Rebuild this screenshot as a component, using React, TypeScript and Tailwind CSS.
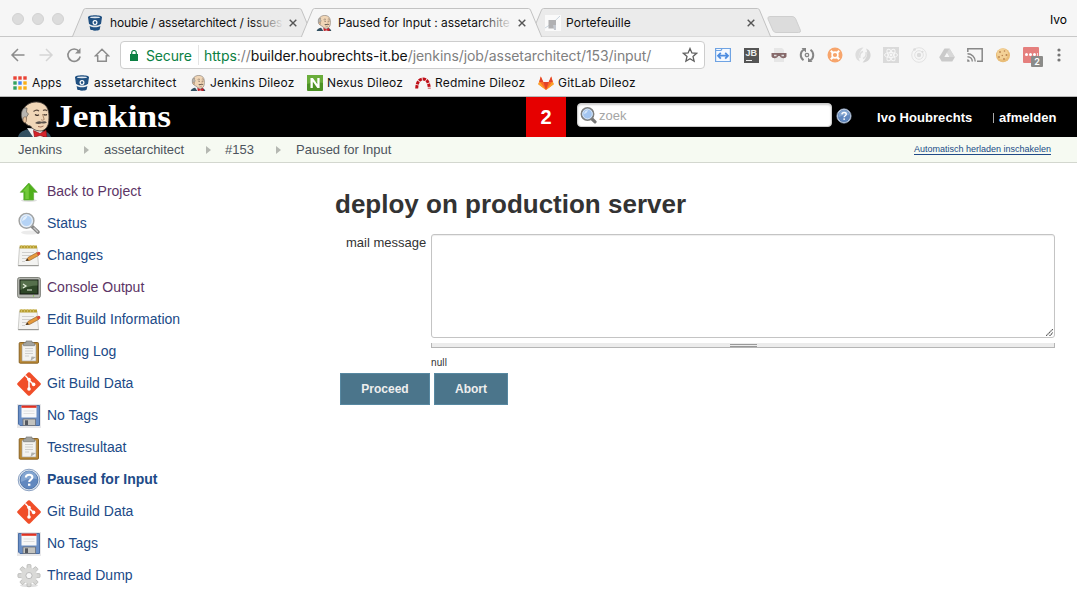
import type { ReactNode } from 'react';

const Mac = "font-['Inter','Liberation_Sans',sans-serif]";

function Svg({ s = 16, box = '0 0 16 16', children, className = '' }: { s?: number; box?: string; children: ReactNode; className?: string }) {
  return (
    <svg width={s} height={s} viewBox={box} fill="none" className={`block shrink-0 ${className}`}>
      {children}
    </svg>
  );
}

const Bitbucket = () => (
  <Svg>
    <path d="M1 2.2C1 .9 4.2.2 8 .2s7 .7 7 2l-.9 6c-.4 1.6-3.2 2.300-6.100 2.300s-5.700-.7-6.100-2.300Z" fill="#205081" />
    <ellipse cx="8" cy="2.300" rx="5" ry=".9" fill="#dfe7ef" />
    <path d="M2.600 11c3 1.700 7.800 1.700 10.800 0l-.7 3.500c-1 1.600-8.400 1.600-9.400 0Z" fill="#205081" />
    <circle cx="8" cy="7.600" r="1.900" stroke="#fff" strokeWidth="1.200" />
  </Svg>
);

const Butler = ({ w = 16, h = 16 }: { w?: number; h?: number }) => (
  <svg width={w} height={h} viewBox="0 0 33 36" fill="none" className="block shrink-0">
    <path d="M0 36c1-4.500 4-6 9-7.500l15 1c5 1 8 3 9 6.500Z" fill="#335061" />
    <path d="M9 27l6 9h10l-1-8Z" fill="#f2f2f2" />
    <path d="M7 21C4 17 3 8 9 4 14 0 23-.5 28 5c3 4 3.500 10 2.500 17-.7 4-3.500 7.500-7.500 8-4 0-8-1-10.500-5C9 24.500 8 23 7 21Z" fill="#f0d6b7" stroke="#4a423c" strokeWidth=".9" />
    <path d="M6 7C3 10 2.500 15 5 20l2.500 1 1-5 2-3-2-2 .5-4Z" fill="#b8b5b0" stroke="#615b55" strokeWidth=".7" />
    <path d="M5.500 16.500q3-2 3 1.500t-1.500 4q-3-1-1.500-5.500Z" fill="#e8c49e" stroke="#755d48" strokeWidth=".6" />
    <path d="M15.500 10.500q3-2.500 5.500-.5M25 9.500q2.500-1.500 4 .5" stroke="#5c4a3d" strokeWidth="1.100" />
    <path d="M17 13.500q2 1.700 4 .3M25.500 13.500q2 1 3.500 0" stroke="#33261f" strokeWidth="1.100" />
    <path d="M24.500 13l1.700 5.500q-1.500 1.300-3.200.2" stroke="#a37e62" strokeWidth=".9" />
    <path d="M17 22q3-2.500 6.500-1.200 3.500-1.300 5.500.7-2.500 1.800-5.200.7Q20 23.700 17 22Z" fill="#5b524c" />
    <path d="M20 25.500q3 1.300 5.500-.5" stroke="#925f49" strokeWidth=".9" />
    <path d="M15.500 29.500l6.500 3 6-3.200.8 6.700H27l-5-1.500-5.500 1.500Z" fill="#d8222a" stroke="#8e141a" strokeWidth=".7" />
  </svg>
);

const Close = () => (
  <Svg s={8} box="0 0 8 8"><path d="M.7.7l6.600 6.600M7.300.7.7 7.300" stroke="#555" strokeWidth="1.400" /></Svg>
);

function Tab({ icon, title, active, fade, text }: { icon: ReactNode; title: string; active?: boolean; fade?: boolean; text: string }) {
  return (
    <div className={`relative -ml-3 h-[29px] w-[241px] shrink-0 ${active ? 'z-10' : ''}`}>
      <svg width="241" height="29" viewBox="0 0 241 29" className="absolute inset-0">
        <path d="M0 28.500h.5L11.500 2Q12.200.5 13.500 .5h214q1.300 0 2 1.500L240.500 28.500h.5" fill={active ? '#f6f6f6' : '#ebebeb'} stroke="#c2c2c2" />
        {active && <path d="M1.500 28.500h238" stroke="#f6f6f6" strokeWidth="1.400" />}
      </svg>
      <div className="relative flex h-full items-center pl-[15px]">
        {icon}
        <div className="relative ml-[6px] w-[175px]">
          <span className={`block whitespace-nowrap text-[12px] leading-[18px] text-[#111] ${text}`}>{title}</span>
          {fade && <span className={`absolute right-0 top-0 h-full w-8 bg-gradient-to-r from-transparent ${active ? 'to-[#f6f6f6]' : 'to-[#ebebeb]'}`} />}
        </div>
        <span className="ml-[5px]"><Close /></span>
      </div>
    </div>
  );
}

const Photo = () => (
  <Svg>
    <rect width="16" height="16" fill="#fafafa" />
    <path d="M0 13Q8 9 15 1" stroke="#c9d5df" />
    <rect x="3.500" y="5" width="7.500" height="8.500" fill="#b0b0b2" />
    <path d="M8 10h3v5H9Z" fill="#c3c7ce" />
  </Svg>
);

const AppsIcon = () => (
  <Svg s={14} box="0 0 14 14">
    {['#ea4335', '#ea4335', '#ea4335', '#34a260', '#4285f4', '#fbaf16', '#34a260', '#fbaf16', '#fbaf16'].map((c, i) => (
      <rect key={i} x={(i % 3) * 5 + 0.3} y={Math.floor(i / 3) * 5 + 0.3} width="3.400" height="3.400" fill={c} />
    ))}
  </Svg>
);

const Nexus = () => (
  <Svg>
    <rect width="16" height="16" rx="1" fill="#4d9225" />
    <path d="M0 0h16v8Q8 6 0 9Z" fill="#6aad3b" />
    <path d="M3.500 13V3h2.400l4.400 6.300V3h2.300v10h-2.300L5.800 6.600V13Z" fill="#fff" />
  </Svg>
);

const Redmine = () => (
  <Svg>
    <path d="M1.700 13.500C2 7.500 4 4 8 4s6 3.500 6.300 9.500" stroke="#c01019" strokeWidth="3" strokeDasharray="3.300 .8" />
  </Svg>
);

const Gitlab = () => (
  <Svg>
    <path d="M8 15 .3 9.300 2.800 1.500 5.300 7h5.400l2.500-5.500 2.500 7.800Z" fill="#fc6d26" />
    <path d="M8 15 5.300 7h5.400Z" fill="#e24329" />
    <path d="M.3 9.300 1.400 6.500 8 15ZM15.700 9.300l-1.100-2.800L8 15Z" fill="#fca326" />
    <path d="M2.800 1.500 1.300 7h4ZM13.200 1.500 14.700 7h-4Z" fill="#e24329" />
  </Svg>
);

const extensions: ReactNode[] = [
  <Svg><path d="M.6 14.500V1.500h14.800v13ZM1 3.500h5l1-1.700" fill="#f4f9ff" stroke="#6fa3e3" strokeWidth="1.200" /><path d="M3.500 8.700h9M5.800 5.800 3 8.700l2.800 2.900M10.200 5.800 13 8.700l-2.800 2.900" stroke="#4e8de0" strokeWidth="1.800" /></Svg>,
  <div className="relative h-[15px] w-[15px] bg-[#555] pl-[2px] font-['Liberation_Sans',sans-serif] text-[9px] font-bold leading-[11px] text-[#eee]">JB<span className="absolute bottom-[2px] left-[2px] h-px w-[6px] bg-[#eee]" /></div>,
  <Svg><path d="M3 1h8l2 2v12H3Z" fill="#e6e6e6" /><path d="M.5 6h15v3.500q-.5 2-3.500 1.800Q9.500 11 8.700 9H7.300Q6.500 11 4 11.300 1 11.500.5 9.500Z" fill="#86696a" /><path d="M3 8.500h2.500M10.500 8.500H13" stroke="#ddd" strokeWidth="1.300" /></Svg>,
  <Svg><path d="M4.500 13.200A6.400 6.400 0 0 1 4.800 2.500M11.500 2.800A6.400 6.400 0 0 1 11.200 13.500" stroke="#858585" strokeWidth="2" /><path d="M2.500 1H7v4.500ZM13.500 15H9v-4.500Z" fill="#858585" /><circle cx="8" cy="8" r="1.700" stroke="#858585" strokeWidth="1.300" /></Svg>,
  <Svg><circle cx="8" cy="8" r="7.500" fill="#f7a56c" /><circle cx="8" cy="8" r="2.900" stroke="#fff" strokeWidth="1.600" /><path d="m3.800 3.800 2 2m4.400 4.400 2 2m0-8.400-2 2m-4.400 4.400-2 2" stroke="#fff" strokeWidth="2.200" /></Svg>,
  <Svg><path d="M8.500.5C2 1 0 5 .5 9c.3 3 2.500 5 4.500 5.500C2.500 10 4 5 8.500.5Z" fill="#ddd" /><path d="M7.500 15.500C14 15 16 11 15.500 7c-.3-3-2.500-5-4.500-5.500C13.500 6 12 11 7.500 15.500Z" fill="#d5d5d5" /><path d="M5 11q-1-5 3-6.500M11 5q1 5-3 6.500" stroke="#ddd" strokeWidth="1.500" /></Svg>,
  <Svg><rect width="16" height="16" fill="#dadada" /><g stroke="#f7f7f7"><ellipse cx="8" cy="8" rx="6.500" ry="2.500" /><ellipse cx="8" cy="8" rx="6.500" ry="2.500" transform="rotate(60 8 8)" /><ellipse cx="8" cy="8" rx="6.500" ry="2.500" transform="rotate(120 8 8)" /></g><circle cx="8" cy="8" r="1.400" fill="#f7f7f7" /></Svg>,
  <Svg><circle cx="8" cy="8" r="7.300" stroke="#e2e2e2" strokeWidth="1" /><circle cx="8" cy="8" r="4.300" stroke="#e2e2e2" strokeWidth="1" /><circle cx="8" cy="8" r="2.200" fill="#dcdcdc" /><circle cx="3.500" cy="2.500" r="1.300" fill="#dcdcdc" /><circle cx="11.500" cy="4.800" r="1.100" fill="#dcdcdc" /></Svg>,
  <Svg><path d="M5.500 1.500h5l5.300 8.800-2.500 4.200H2.700L.2 10.300Z" fill="#cacaca" /><path d="M8 5.500 5.300 10h5.400Z" fill="#f6f6f6" /><path d="M10.500 1.500 8 5.500l2.700 4.500h5Z" fill="#d8d8d8" /></Svg>,
  <Svg><path d="M.8 5V1.700h14.400v12.600H10" stroke="#888" strokeWidth="1.500" /><path d="M.5 6.800a7.700 7.700 0 0 1 7.700 7.700M.5 9.700a4.800 4.800 0 0 1 4.800 4.800" stroke="#888" strokeWidth="1.400" /><path d="M.2 12.200a2.500 2.500 0 0 1 2.500 2.500H.2Z" fill="#888" /></Svg>,
  <Svg><circle cx="8" cy="8.200" r="7" fill="#e9bd78" /><circle cx="7.500" cy="7" r="5.500" fill="#f3d196" /><g fill="#b98350"><circle cx="5" cy="5" r=".9" /><circle cx="9.500" cy="4" r=".8" /><circle cx="11.500" cy="8" r="1" /><circle cx="7.300" cy="8.500" r=".8" /><circle cx="4" cy="10" r=".9" /><circle cx="9" cy="12" r=".9" /></g></Svg>,
  <div className="relative h-4 w-4 rounded-[1px] bg-[#e57f7d]">
    <div className="flex gap-[1px] pl-[2px] pt-[6px]"><i className="h-[3px] w-[3px] rounded-full bg-white" /><i className="h-[3px] w-[3px] rounded-full bg-white" /><i className="h-[3px] w-[3px] rounded-full bg-white" /><i className="h-[3px] w-px bg-white/70" /></div>
    <span className="absolute left-2 top-[9px] h-[11px] w-3 rounded-[1px] bg-[#8b8b89] text-center font-['Inter',sans-serif] text-[9px] font-semibold leading-[11px] text-white">2</span>
  </div>,
  <Svg><g fill="#757575"><circle cx="8" cy="3" r="1.600" /><circle cx="8" cy="8" r="1.600" /><circle cx="8" cy="13" r="1.600" /></g></Svg>,
];

const Magnifier = ({ s = 24 }: { s?: number }) => (
  <Svg s={s} box="0 0 24 24">
    <ellipse cx="13" cy="20.500" rx="9" ry="2" fill="#000" opacity=".08" />
    <path d="m14.500 14 6.500 6" stroke="#858585" strokeWidth="3.600" strokeLinecap="round" />
    <path d="m17 16 3.500 3.500" stroke="#c9c9c9" strokeWidth="1.300" strokeLinecap="round" />
    <circle cx="9.500" cy="8.800" r="7.400" fill="#a9cbf0" stroke="#a2a2a0" strokeWidth="1.400" />
    <circle cx="9.500" cy="8.800" r="5.900" fill="#b5d3f5" stroke="#e9eff6" strokeWidth="1.200" />
    <path d="M5 9q1-5 5.500-5.200Q9 8 5 9Z" fill="#e4f0fc" />
  </Svg>
);

const SearchIcon = () => (
  <Svg s={17} box="0 0 17 17">
    <path d="m11 11 4 3.800" stroke="#777" strokeWidth="3.200" strokeLinecap="round" />
    <circle cx="7.500" cy="7" r="6.200" fill="#8fb8ea" stroke="#7f7f7c" strokeWidth="1.500" />
    <circle cx="7.500" cy="7" r="4.800" fill="#a3c5f0" stroke="#dfe7ef" strokeWidth=".9" />
    <path d="M4 7q.5-3.500 4-4Q7 6.500 4 7Z" fill="#d5e6fa" />
  </Svg>
);

const Notepad = () => (
  <Svg s={24} box="0 0 24 24">
    <path d="M2.500 3h17.500l1.500 18.500H1.200Z" fill="#f3f3f1" stroke="#c2c2be" strokeWidth=".8" />
    <path d="M1.200 21.700h20.500" stroke="#8e8e8b" strokeWidth="1" />
    <path d="M2.700 1.500h17.300v3H2.700Z" fill="#b9a032" />
    <path d="M4.500 1v3M7.500 1v3M10.500 1v3M13.500 1v3M16.500 1v3" stroke="#d3c068" strokeWidth=".9" />
    <path d="M5 8.500h12M5 11.500h9M5 14.500h5M5 17.500h3" stroke="#cfcfcd" strokeWidth="1" />
    <path d="m9 16.500 2-3 9-5 1.500 3-9 5Z" fill="#e69a3c" stroke="#96642b" strokeWidth=".7" />
    <path d="m19.500 9 2-1.200q2 0 1.900 2.400l-2 1.600Z" fill="#d64a3a" />
    <path d="m8.500 17 2.200-2.400 1 1.800Z" fill="#3d3429" />
  </Svg>
);

const Terminal = () => (
  <Svg s={24} box="0 0 24 24">
    <rect x=".6" y="1.500" width="22.800" height="20.300" rx="2" fill="#b5b7b1" stroke="#777972" strokeWidth=".9" />
    <rect x="3" y="4" width="18" height="14" fill="#2e4727" stroke="#11170f" />
    <path d="M3.500 4.500h17v5Q11 9.500 3.500 14Z" fill="#56704c" />
    <path d="m6 8 3 2-3 2M10 14h5" stroke="#e6f0dd" strokeWidth="1.200" />
    <circle cx="16.500" cy="19.900" r=".7" fill="#7dc52f" />
  </Svg>
);

const Clipboard = () => (
  <Svg s={24} box="0 0 24 24">
    <rect x="2.200" y="2.500" width="19.300" height="20.700" rx="1" fill="#bd8a35" stroke="#80591b" strokeWidth=".9" />
    <path d="M5 4.500h14v16.500h-14Z" fill="#f3f3f1" stroke="#a3a09a" strokeWidth=".6" />
    <path d="M8 8.500h8M8 11h8M8 13.500h8M8 16h4" stroke="#cfcfcd" />
    <path d="m13.500 21 1-4.500 4.500.5Z" fill="#b0b0ac" />
    <path d="M6.500 5.700V3.500Q7 2.500 9 2.500V1h6v1.500q2 0 2.500 1v2.200Z" fill="#a2a39f" stroke="#7b7c78" strokeWidth=".7" />
  </Svg>
);

const Git = () => (
  <Svg s={24} box="0 0 24 24">
    <path d="M11 .6q1-.9 2 0l10.400 10.400q.9 1 0 2L13 23.400q-1 .9-2 0L.6 13q-.9-1 0-2Z" fill="#f04e29" />
    <path d="M8.300 3.500 12 7.500V17M12 8l4.500 4.500" stroke="#fff" strokeWidth="1.500" />
    <g fill="#fff"><circle cx="12" cy="7.600" r="1.800" /><circle cx="12" cy="17" r="1.800" /><circle cx="16.600" cy="12.400" r="1.800" /></g>
  </Svg>
);

const Floppy = () => (
  <Svg s={24} box="0 0 24 24">
    <rect width="24" height="24" fill="#e8e8ea" />
    <path d="M1.500 1.500h21v20H3l-1.500-1.500Z" fill="#6a8fc6" stroke="#4b6fa5" />
    <path d="M4.500 1.500h15v12h-15Z" fill="#f8f8f8" />
    <path d="M4.500 1.500h15v2.300h-15Z" fill="#e2301f" />
    <path d="M6.500 7h11M6.500 9.500h11" stroke="#e0e0e0" />
    <path d="M6 15h12.500v6.500H6Z" fill="#c3c3bf" stroke="#6b7079" strokeWidth=".8" />
    <path d="M8 16.300h3v4.700H8Z" fill="#54585f" />
  </Svg>
);

const HelpIcon = ({ s = 24 }: { s?: number }) => (
  <Svg s={s} box="0 0 24 24">
    <circle cx="12" cy="12" r="10.800" fill="#dde5ef" stroke="#8da3c3" strokeWidth="1" />
    <circle cx="12" cy="12" r="8.900" fill="#6188bf" stroke="#4a70a7" strokeWidth=".9" />
    <path d="M4 11a8 8 0 0 1 16 0Q12 9 4 14Z" fill="#83a5d1" />
    <path d="M8.800 9.500Q9 6.700 12.200 6.700t3.200 2.600c0 2.200-3.200 2.300-3.200 4.700" stroke="#fff" strokeWidth="2.100" />
    <rect x="11" y="15.600" width="2.400" height="2.200" fill="#fff" />
  </Svg>
);

const Gear = () => (
  <Svg s={24} box="0 0 24 24">
    <ellipse cx="12" cy="21.500" rx="9" ry="1.600" fill="#000" opacity=".12" />
    {[0, 45, 90, 135].map((a) => (
      <rect key={a} x="10" y=".5" width="4" height="22.200" rx="1" fill="#d6d6d4" stroke="#b2b2b0" strokeWidth=".7" transform={`rotate(${a} 12 11.600)`} />
    ))}
    <circle cx="12" cy="11.600" r="8" fill="#dadad8" />
    <circle cx="12" cy="11.600" r="3.100" fill="#f8f8f8" stroke="#b5b5b5" strokeWidth=".9" />
  </Svg>
);

const UpArrow = () => (
  <Svg s={24} box="0 0 24 24">
    <ellipse cx="12" cy="20.500" rx="8" ry="1.500" fill="#000" opacity=".12" />
    <path d="M11.800 3 20.300 12.300H16.600V20H6.800V12.300H3.300Z" fill="#4fb01b" stroke="#5fae38" strokeWidth=".7" />
    <path d="M11.800 4.500 5.500 11.500h2.800V19h3.500V9Z" fill="#72c93a" />
  </Svg>
);

const tasks: { label: string; icon: ReactNode; cls: string }[] = [
  { label: 'Back to Project', icon: <UpArrow />, cls: 'text-[#5c3566]' },
  { label: 'Status', icon: <Magnifier />, cls: 'text-[#204a87]' },
  { label: 'Changes', icon: <Notepad />, cls: 'text-[#204a87]' },
  { label: 'Console Output', icon: <Terminal />, cls: 'text-[#5c3566]' },
  { label: 'Edit Build Information', icon: <Notepad />, cls: 'text-[#204a87]' },
  { label: 'Polling Log', icon: <Clipboard />, cls: 'text-[#204a87]' },
  { label: 'Git Build Data', icon: <Git />, cls: 'text-[#204a87]' },
  { label: 'No Tags', icon: <Floppy />, cls: 'text-[#204a87]' },
  { label: 'Testresultaat', icon: <Clipboard />, cls: 'text-[#204a87]' },
  { label: 'Paused for Input', icon: <HelpIcon />, cls: 'font-bold text-[#204a87]' },
  { label: 'Git Build Data', icon: <Git />, cls: 'text-[#204a87]' },
  { label: 'No Tags', icon: <Floppy />, cls: 'text-[#204a87]' },
  { label: 'Thread Dump', icon: <Gear />, cls: 'text-[#204a87]' },
];

const bookmarks: { label: string; icon: ReactNode; w: string; t: string }[] = [
  { label: 'Apps', icon: <AppsIcon />, w: 'w-[61px] gap-[5px]', t: 'tracking-[0.1px]' },
  { label: 'assetarchitect', icon: <Bitbucket />, w: 'w-[116px] gap-1', t: 'tracking-[0.2px]' },
  { label: 'Jenkins Dileoz', icon: <Butler />, w: 'w-[117px] gap-1', t: 'tracking-[0.15px]' },
  { label: 'Nexus Dileoz', icon: <Nexus />, w: 'w-[108px] gap-1', t: 'tracking-[0.15px]' },
  { label: 'Redmine Dileoz', icon: <Redmine />, w: 'w-[123px] gap-1', t: 'tracking-[0.17px]' },
  { label: 'GitLab Dileoz', icon: <Gitlab />, w: 'w-[110px] gap-1', t: 'tracking-[0.2px]' },
];

function BrowserChrome() {
  return (
    <header className={`h-[97px] border-b border-[#b8b8b8] bg-[#f6f6f6] ${Mac}`}>
      <div className="flex h-[37px] items-end border-b border-[#c8c8c8]">
        <div className="flex h-full w-[84px] shrink-0 gap-2 pl-3 pt-[13px]">
          <i className="h-3 w-3 rounded-full border border-[#d2d2d2] bg-[#dcdcdc]" />
          <i className="h-3 w-3 rounded-full border border-[#d2d2d2] bg-[#dcdcdc]" />
          <i className="h-3 w-3 rounded-full border border-[#d2d2d2] bg-[#dcdcdc]" />
        </div>
        <div className="-mb-px flex items-end">
          <Tab icon={<Bitbucket />} title="houbie / assetarchitect / issues" fade text="pl-[1px] tracking-[-0.14px]" />
          <Tab icon={<Butler />} title="Paused for Input : assetarchite" active fade text="tracking-[-0.03px]" />
          <Tab icon={<Photo />} title="Portefeuille" text="-ml-px tracking-[0.05px]" />
        </div>
        <svg width="34" height="17" viewBox="0 0 34 17" className="-ml-1 mb-[3px] shrink-0">
          <path d="M1 3Q.3.500 3 .500H25q2.500 0 3.500 2l5 12q.5 2-2 2H9q-2 0-3-2Z" fill="#dcdcdc" stroke="#cfcfcf" />
        </svg>
        <span className="ml-auto mr-[10px] self-start pt-[11px] text-[12px] leading-[18px] text-black">Ivo</span>
      </div>
      <div className="flex h-[36px] items-center">
        <div className="flex w-[120px] shrink-0 items-center gap-3 pl-[10px]">
          <Svg><path d="M14.500 8H2.500M8 2 2 8l6 6" stroke="#8c8c8c" strokeWidth="1.500" /></Svg>
          <Svg><path d="M1.500 8h12M8 2l6 6-6 6" stroke="#d5d5d5" strokeWidth="1.500" /></Svg>
          <Svg><path d="M13 4.300A6.200 6.200 0 1 0 14.200 9.500" stroke="#8c8c8c" strokeWidth="1.600" /><path d="M14.500 1v5.500H9Z" fill="#8c8c8c" /></Svg>
          <Svg><path d="M1.500 8.700 8 2.200l6.500 6.500h-2.200v5.500H3.700V8.700Z" stroke="#8c8c8c" strokeWidth="1.500" /></Svg>
        </div>
        <div className="flex h-[28px] w-[585px] shrink-0 items-center rounded-[4px] border border-[#cdcdcd] bg-white pl-[9px] pr-[6px] text-[14px]">
          <Svg s={8} box="0 0 8 11" className="h-[11px]"><path d="M0 4h8v7H0Z" fill="#0b8043" /><path d="M1.700 5V2.800a2.300 2.300 0 0 1 4.600 0V5" stroke="#0b8043" strokeWidth="1.200" /></Svg>
          <span className="ml-2 w-[52px] whitespace-nowrap tracking-[-0.15px] text-[#0b8043]">Secure</span>
          <span className="h-5 w-px bg-[#e4e4e4]" />
          <span className="ml-[5px] whitespace-nowrap tracking-[-0.072px] text-[#808080]">
            <span className="text-[#0b8043]">https</span>://<span className="text-[#111]">builder.houbrechts-it.be</span>/jenkins/job/assetarchitect/153/input/
          </span>
          <Svg className="ml-auto"><path d="m8 1.500 1.900 4.400 4.700.4L11 9.500l1.100 4.700L8 11.700l-4.100 2.500L5 9.500 1.400 6.300l4.700-.4Z" stroke="#5f5f5f" strokeWidth="1.300" /></Svg>
        </div>
        <div className="ml-[4px] flex items-center">
          {extensions.map((e, i) => (
            <span key={i} className="flex w-7 items-center justify-center">{e}</span>
          ))}
        </div>
      </div>
      <div className="flex h-[20px] items-center pl-[13px] text-[12px] text-[#111]">
        {bookmarks.map((b) => (
          <span key={b.label} className={`flex shrink-0 items-center whitespace-nowrap ${b.w}`}>
            {b.icon}
            <span className={b.t}>{b.label}</span>
          </span>
        ))}
      </div>
    </header>
  );
}

const Crumb = () => (
  <svg width="5" height="8" viewBox="0 0 5 8" className="mt-px block shrink-0"><path d="M0 0 5 4 0 8Z" fill="#b5b8b2" /></svg>
);

export default function App() {
  return (
    <div className="h-[600px] w-[1077px] overflow-hidden bg-white font-['Liberation_Sans',Arial,sans-serif] text-[#333]">
      <BrowserChrome />
      <div className="flex h-10 bg-black text-white">
        <div className="flex w-[526px] shrink-0 pl-[18px]">
          <div className="pt-1"><Butler w={33} h={36} /></div>
          <span className="ml-[4px] inline-block origin-left scale-x-[1.14] self-start pt-[3px] font-['Liberation_Serif',serif] text-[31px] font-bold leading-[34px]">Jenkins</span>
        </div>
        <div className="flex w-10 shrink-0 items-center justify-center bg-[#e60000] pt-px text-[20px] font-bold leading-[38px]"><span className="-mt-[2px]">2</span></div>
        <div className="ml-[11px] mt-[6px] flex h-6 w-[255px] shrink-0 items-center rounded-[4px] border border-[#ccc] bg-white pl-[2px] shadow-[inset_0_1px_2px_#ccc]">
          <SearchIcon />
          <span className="ml-[2px] mt-[2px] text-[13px] text-[#a5a5a5]">zoek</span>
        </div>
        <div className="ml-1 mt-[11px]"><HelpIcon s={16} /></div>
        <div className="ml-[25px] flex items-center pt-[2px] text-[13px] font-bold">
          <span className="w-[116px] tracking-[0.05px]">Ivo Houbrechts</span>
          <span className="mr-[5px] h-[10px] w-px bg-[#aaa]" />
          <span className="tracking-[0.05px]">afmelden</span>
        </div>
      </div>
      <nav className="flex h-[26px] items-center border-b border-[#d3d7cf] bg-[#f6faf2] pl-[18px] text-[13px] text-[#4d545d]">
        <span className="w-[66px]">Jenkins</span><Crumb />
        <span className="ml-[15px] w-[102px]">assetarchitect</span><Crumb />
        <span className="ml-[14px] w-[51px]">#153</span><Crumb />
        <span className="ml-[15px]">Paused for Input</span>
        <a className="ml-auto mr-[26px] mt-px border-b border-[#204a87] text-[9px] leading-[9px] text-[#204a87]">Automatisch herladen inschakelen</a>
      </nav>
      <div className="flex">
        <aside className="w-[335px] shrink-0 pl-[17px] pt-[13px]">
          {tasks.map((t, i) => (
            <div key={i} className={`flex h-8 items-center text-[14px] ${t.cls}`}>
              {t.icon}
              <span className="-mt-px ml-[6px]">{t.label}</span>
            </div>
          ))}
        </aside>
        <main className="w-[720px] pt-[26px]">
          <h1 className="h-[45px] text-[26px] font-bold leading-[30px]">deploy on production server</h1>
          <div className="flex">
            <label className="w-[96px] pl-[11px] text-[13px] leading-[18px]">mail message</label>
            <div className="w-[624px]">
              <div className="flex h-[104px] items-end justify-end rounded-[3px] border border-[#c4c4c4] p-px shadow-[inset_0_1px_1px_#eee]">
                <Svg s={7} box="0 0 7 7"><path d="M0 7 7 0M3.500 7 7 3.500" stroke="#555" strokeWidth="1.100" strokeDasharray="1.500 .6" /></Svg>
              </div>
              <div className="mt-[5px] flex h-[5px] items-start justify-center border-x border-b border-[#b5b5b5] bg-[#ececec]">
                <span className="mt-px h-[3px] w-[27px] border-y border-[#999]" />
              </div>
              <p className="mt-[9px] h-4 text-[10px] leading-[12px] tracking-[0.1px]">null</p>
            </div>
          </div>
          <div className="flex gap-1 pl-[5px] text-[12px] font-bold text-[#eee]">
            <button className="h-8 w-[90px] border border-[#5788a1] bg-[#4b758b]">Proceed</button>
            <button className="h-8 w-[74px] border border-[#5788a1] bg-[#4b758b]">Abort</button>
          </div>
        </main>
      </div>
    </div>
  );
}
